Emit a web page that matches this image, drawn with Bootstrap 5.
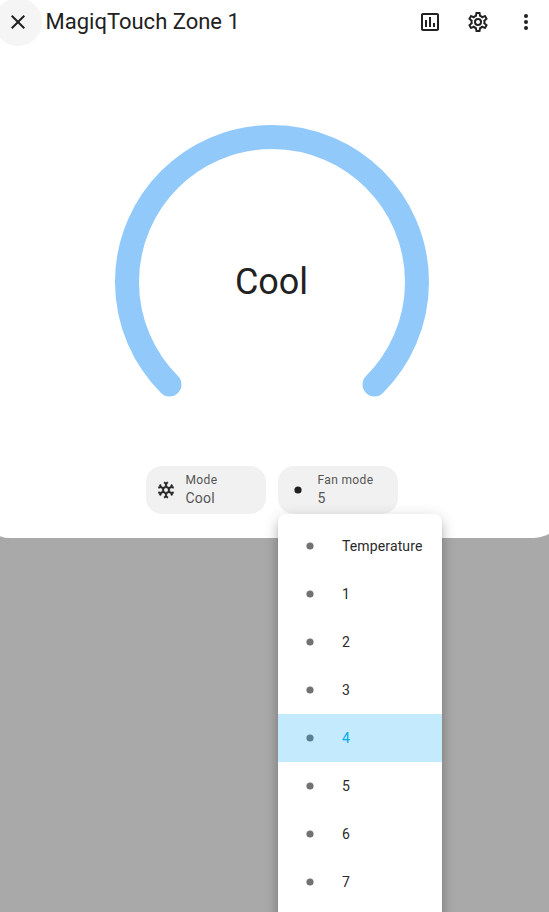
<!DOCTYPE html>
<html lang="en">
<head>
<meta charset="utf-8">
<meta name="viewport" content="width=device-width, initial-scale=1">
<title>MagiqTouch Zone 1</title>
<link href="https://cdn.jsdelivr.net/npm/bootstrap@5.3.0/dist/css/bootstrap.min.css" rel="stylesheet">
<style>
  html, body { height: 100%; }
  body { background: #a9a9a9; color: #212121; font-family: Roboto, sans-serif; -webkit-font-smoothing: antialiased; }
  svg { fill: currentColor; display: block; flex: none; }
  .climate-dialog { width: 580px; height: 552px; margin: -14px 0 0 -18px; border-radius: 28px; padding: 12px; background: #fff; flex: none; }
  .tool-btn { width: 48px; height: 48px; padding: 0; border: 0; background: transparent; color: #212121; }
  .tool-btn.hovered { background: #f5f5f5; }
  .dialog-title { font-size: 22px; line-height: 28px; font-weight: 400; margin: 0 0 0 3.5px; }
  .dial { width: 320px; height: 320px; margin: 76px auto 0; display: grid; place-items: center; }
  .dial > * { grid-area: 1 / 1; }
  .dial path { fill: none; stroke: #91cafa; stroke-width: 24; stroke-linecap: round; }
  .dial-label { font-size: 36px; line-height: 44px; margin-right: 1px; }
  .controls { gap: 12px; margin-top: 24px; }
  .select-btn { width: 120px; height: 48px; border: 0; border-radius: 16px; background: #f1f1f1; padding: 0 10px; gap: 9.5px; text-align: left; color: #212121; }
  .select-btn .caption { font-size: 12px; line-height: 16px; letter-spacing: .35px; color: #555; }
  .select-btn .value { font-size: 14px; line-height: 20px; letter-spacing: .25px; color: #555; }
  .snowflake { stroke: currentColor; stroke-width: .5; }
  .fan-menu { top: 48px; left: 0; width: 164px; height: 440px; padding: 8px 0 0; border-radius: 8px; background: #fff; z-index: 5;
    box-shadow: 0 5px 5px -3px rgba(0,0,0,.2), 0 8px 10px 1px rgba(0,0,0,.14), 0 3px 14px 2px rgba(0,0,0,.12); }
  .fan-option { height: 48px; padding-left: 20px; gap: 20px; font-size: 14px; letter-spacing: .13px; line-height: 20px; color: #2a2a2a; }
  .fan-option svg { color: #727272; }
  .fan-option.picked { background: #c4eafe; color: #03a9f4; }
  .fan-option.picked svg { color: #5a8095; }
</style>
<script src="https://cdn.jsdelivr.net/npm/bootstrap@5.3.0/dist/js/bootstrap.bundle.min.js"></script>
</head>
<body class="overflow-hidden d-flex align-items-start">
<svg class="d-none"><symbol id="dot" viewBox="0 0 24 24"><circle cx="12" cy="12" r="3.6"/></symbol></svg>
<main class="climate-dialog">
  <header class="d-flex align-items-center">
    <button class="tool-btn hovered rounded-circle d-flex align-items-center justify-content-center" aria-label="Close">
      <svg width="24" height="24" viewBox="0 0 24 24"><path d="M19,6.41L17.59,5L12,10.59L6.41,5L5,6.41L10.59,12L5,17.59L6.41,19L12,13.41L17.59,19L19,17.59L13.41,12L19,6.41Z"/></svg>
    </button>
    <h1 class="dialog-title flex-grow-1">MagiqTouch Zone 1</h1>
    <button class="tool-btn d-flex align-items-center justify-content-center" aria-label="History">
      <svg width="24" height="24" viewBox="0 0 24 24"><path d="M9 17H7V10H9V17M13 17H11V7H13V17M17 17H15V13H17V17M19 19H5V5H19V19.1M19 3H5C3.9 3 3 3.9 3 5V19C3 20.1 3.9 21 5 21H19C20.1 21 21 20.1 21 19V5C21 3.9 20.1 3 19 3Z"/></svg>
    </button>
    <button class="tool-btn d-flex align-items-center justify-content-center" aria-label="Settings">
      <svg width="24" height="24" viewBox="0 0 24 24"><path d="M12,8A4,4 0 0,1 16,12A4,4 0 0,1 12,16A4,4 0 0,1 8,12A4,4 0 0,1 12,8M12,10A2,2 0 0,0 10,12A2,2 0 0,0 12,14A2,2 0 0,0 14,12A2,2 0 0,0 12,10M10,22C9.75,22 9.54,21.82 9.5,21.58L9.13,18.93C8.5,18.68 7.96,18.34 7.44,17.94L4.95,18.95C4.73,19.03 4.46,18.95 4.34,18.73L2.34,15.27C2.21,15.05 2.27,14.78 2.46,14.63L4.57,12.97L4.5,12L4.57,11L2.46,9.37C2.27,9.22 2.21,8.95 2.34,8.73L4.34,5.27C4.46,5.05 4.73,4.96 4.95,5.05L7.44,6.05C7.96,5.66 8.5,5.32 9.13,5.07L9.5,2.42C9.54,2.18 9.75,2 10,2H14C14.25,2 14.46,2.18 14.5,2.42L14.87,5.07C15.5,5.32 16.04,5.66 16.56,6.05L19.05,5.05C19.27,4.96 19.54,5.05 19.66,5.27L21.66,8.73C21.79,8.95 21.73,9.22 21.54,9.37L19.43,11L19.5,12L19.43,13L21.54,14.63C21.73,14.78 21.79,15.05 21.66,15.27L19.66,18.73C19.54,18.95 19.27,19.04 19.05,18.95L16.56,17.95C16.04,18.34 15.5,18.68 14.87,18.93L14.5,21.58C14.46,21.82 14.25,22 14,22H10M11.25,4L10.88,6.61C9.68,6.86 8.62,7.5 7.85,8.39L5.44,7.35L4.69,8.65L6.8,10.2C6.4,11.37 6.4,12.64 6.8,13.8L4.68,15.36L5.43,16.66L7.86,15.62C8.63,16.5 9.68,17.14 10.87,17.38L11.24,20H12.76L13.13,17.39C14.32,17.14 15.37,16.5 16.14,15.62L18.57,16.66L19.32,15.36L17.2,13.81C17.6,12.64 17.6,11.37 17.2,10.2L19.31,8.65L18.56,7.35L16.15,8.39C15.38,7.5 14.32,6.86 13.12,6.62L12.75,4H11.25Z"/></svg>
    </button>
    <button class="tool-btn d-flex align-items-center justify-content-center" aria-label="More">
      <svg width="24" height="24" viewBox="0 0 24 24"><circle cx="12" cy="6" r="2"/><circle cx="12" cy="12" r="2"/><circle cx="12" cy="18" r="2"/></svg>
    </button>
  </header>

  <section class="dial">
    <svg width="320" height="320" viewBox="-160 -160 320 320"><path d="M-102.53,102.53A145,145 0 1 1 102.53,102.53"/></svg>
    <div class="dial-label">Cool</div>
  </section>

  <section class="controls d-flex justify-content-center">
    <button class="select-btn d-flex align-items-center">
      <svg class="snowflake" width="20" height="20" viewBox="0 0 24 24"><path d="M20.79,13.95L18.46,14.57L16.46,13.44V10.56L18.46,9.43L20.79,10.05L21.31,8.12L19.54,7.65L20,5.88L18.07,5.36L17.45,7.69L15.45,8.82L13,7.38V5.12L14.71,3.41L13.29,2L12,3.29L10.71,2L9.29,3.41L11,5.12V7.38L8.5,8.82L6.5,7.69L5.92,5.36L4,5.88L4.47,7.65L2.7,8.12L3.22,10.05L5.55,9.43L7.55,10.56V13.45L5.55,14.58L3.22,13.96L2.7,15.89L4.47,16.36L4,18.12L5.93,18.64L6.55,16.31L8.55,15.18L11,16.62V18.88L9.29,20.59L10.71,22L12,20.71L13.29,22L14.7,20.59L13,18.88V16.62L15.5,15.17L17.5,16.3L18.12,18.63L20,18.12L19.53,16.35L21.3,15.88L20.79,13.95M9.5,10.56L12,9.11L14.5,10.56V13.44L12,14.89L9.5,13.44V10.56Z"/></svg>
      <span class="d-flex flex-column"><span class="caption">Mode</span><span class="value">Cool</span></span>
    </button>
    <div class="position-relative">
      <button class="select-btn d-flex align-items-center" aria-expanded="true">
        <svg width="20" height="20" viewBox="0 0 20 20"><circle cx="10" cy="10" r="3.6"/></svg>
        <span class="d-flex flex-column"><span class="caption">Fan mode</span><span class="value">5</span></span>
      </button>
      <div class="fan-menu position-absolute" role="listbox">
        <div class="fan-option d-flex align-items-center"><svg width="24" height="24"><use href="#dot"/></svg>Temperature</div>
        <div class="fan-option d-flex align-items-center"><svg width="24" height="24"><use href="#dot"/></svg>1</div>
        <div class="fan-option d-flex align-items-center"><svg width="24" height="24"><use href="#dot"/></svg>2</div>
        <div class="fan-option d-flex align-items-center"><svg width="24" height="24"><use href="#dot"/></svg>3</div>
        <div class="fan-option picked d-flex align-items-center"><svg width="24" height="24"><use href="#dot"/></svg>4</div>
        <div class="fan-option d-flex align-items-center"><svg width="24" height="24"><use href="#dot"/></svg>5</div>
        <div class="fan-option d-flex align-items-center"><svg width="24" height="24"><use href="#dot"/></svg>6</div>
        <div class="fan-option d-flex align-items-center"><svg width="24" height="24"><use href="#dot"/></svg>7</div>
      </div>
    </div>
  </section>
</main>
</body>
</html>
